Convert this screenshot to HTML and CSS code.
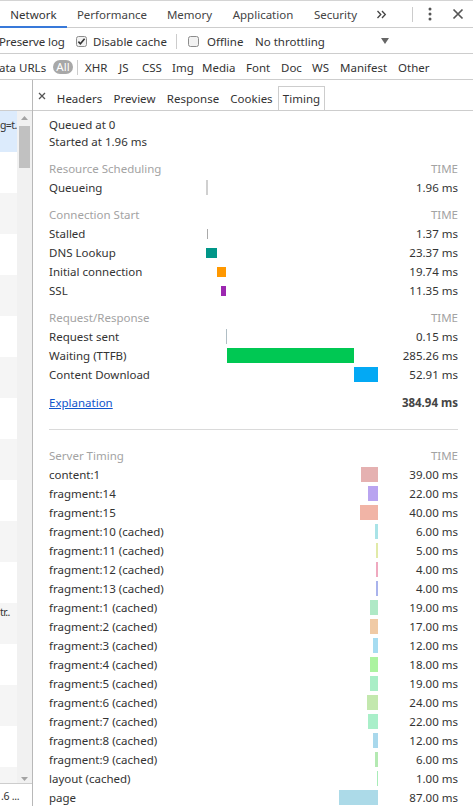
FILE: index.html
```html
<!DOCTYPE html>
<html>
<head>
<meta charset="utf-8">
<title>Network - Timing</title>
<link rel="stylesheet" href="styles.css">
</head>
<body>
<div class="app">
  <div class="tabbar">
    <div class="tab active t-network">Network</div>
    <div class="tab t-perf">Performance</div>
    <div class="tab t-memory">Memory</div>
    <div class="tab t-app">Application</div>
    <div class="tab t-security">Security</div>
    <div class="more"><svg width="11" height="9" viewBox="0 0 11 9"><path d="M1.5 1l3.3 3.5L1.5 8M6 1l3.3 3.5L6 8" fill="none" stroke="#444" stroke-width="1.3"/></svg></div>
    <div class="spacer"></div>
    <div class="vsep"></div>
    <div class="icon kebab"><svg width="16" height="16" viewBox="0 0 16 16"><circle cx="8" cy="3" r="1.5"/><circle cx="8" cy="8" r="1.5"/><circle cx="8" cy="13" r="1.5"/></svg></div>
    <div class="icon closeall"><svg width="16" height="16" viewBox="0 0 16 16"><path d="M3.5 3.5l9 9M12.5 3.5l-9 9" fill="none" stroke="#555" stroke-width="1.7"/></svg></div>
  </div>

  <div class="toolbar opts">
    <span class="lbl l-preserve">Preserve log</span>
    <span class="cb cb-first"><svg width="11" height="11" viewBox="0 0 11 11"><rect x="0.5" y="0.5" width="10" height="10" rx="2" fill="#f2f2f2" stroke="#8c8c8c"/><path d="M2.4 5.6l2 2.1 4.2-4.9" fill="none" stroke="#333" stroke-width="1.6"/></svg></span>
    <span class="lbl l-disable">Disable cache</span>
    <span class="tsep"></span>
    <span class="cb cb-second"><svg width="11" height="11" viewBox="0 0 11 11"><rect x="0.5" y="0.5" width="10" height="10" rx="2" fill="#f2f2f2" stroke="#8c8c8c"/></svg></span>
    <span class="lbl l-offline">Offline</span>
    <span class="lbl l-throttle">No throttling</span>
    <span class="dd"><svg width="8" height="6" viewBox="0 0 8 6"><path d="M0 0h8L4 6z" fill="#666"/></svg></span>
  </div>

  <div class="toolbar filters">
    <span class="lbl l-data">ata URLs</span>
    <span class="pill">All</span>
    <span class="fsep"></span>
    <span class="fitem f-xhr">XHR</span>
    <span class="fitem f-js">JS</span>
    <span class="fitem f-css">CSS</span>
    <span class="fitem f-img">Img</span>
    <span class="fitem f-media">Media</span>
    <span class="fitem f-font">Font</span>
    <span class="fitem f-doc">Doc</span>
    <span class="fitem f-ws">WS</span>
    <span class="fitem f-manifest">Manifest</span>
    <span class="fitem f-other">Other</span>
  </div>

  <div class="main">
    <div class="list">
      <div class="list-head"></div>
      <div class="list-body">
        <div class="rows">
          <div class="row sel"><span class="row-text">g=t.</span></div>
          <div class="row"></div>
          <div class="row"></div>
          <div class="row"></div>
          <div class="row"></div>
          <div class="row"></div>
          <div class="row"></div>
          <div class="row"></div>
          <div class="row"></div>
          <div class="row"></div>
          <div class="row"></div>
          <div class="row"></div>
          <div class="row"><span class="row-text top">tr..</span></div>
          <div class="row"></div>
          <div class="row"></div>
          <div class="row"></div>
          <div class="row"></div>
        </div>
        <div class="vscroll">
          <div class="sarrow"><svg width="7" height="4" viewBox="0 0 7 4"><path d="M0 4h7L3.5 0z" fill="#a3a3a3"/></svg></div>
          <div class="thumb"></div>
          <div class="sfill"></div>
          <div class="sarrow down"><svg width="7" height="4" viewBox="0 0 7 4"><path d="M0 0h7L3.5 4z" fill="#a3a3a3"/></svg></div>
        </div>
      </div>
      <div class="list-status">.6 ...</div>
    </div>

    <div class="detail">
      <div class="dtabs">
        <div class="dclose"><svg width="8" height="8" viewBox="0 0 8 8"><path d="M1 1l6 6M7 1l-6 6" fill="none" stroke="#555" stroke-width="1.3"/></svg></div>
        <div class="dtab d-headers">Headers</div>
        <div class="dtab d-preview">Preview</div>
        <div class="dtab d-response">Response</div>
        <div class="dtab d-cookies">Cookies</div>
        <div class="dtab sel d-timing">Timing</div>
      </div>

      <div class="timing">
        <div class="intro">Queued at 0</div>
        <div class="intro">Started at 1.96 ms</div>

        <div class="thead first"><div class="lab">Resource Scheduling</div><div class="bars"></div><div class="tm">TIME</div></div>
        <div class="trow"><div class="lab">Queueing</div><div class="bars"><span class="bar queueing" style="left:0%;width:0.509%"></span></div><div class="tm">1.96 ms</div></div>

        <div class="thead"><div class="lab">Connection Start</div><div class="bars"></div><div class="tm">TIME</div></div>
        <div class="trow"><div class="lab">Stalled</div><div class="bars"><span class="bar short stalled" style="left:0.509%;width:0.356%"></span></div><div class="tm">1.37 ms</div></div>
        <div class="trow"><div class="lab">DNS Lookup</div><div class="bars"><span class="bar short dns" style="left:0.2%;width:6.071%"></span></div><div class="tm">23.37 ms</div></div>
        <div class="trow"><div class="lab">Initial connection</div><div class="bars"><span class="bar short connecting" style="left:6.4%;width:5.128%"></span></div><div class="tm">19.74 ms</div></div>
        <div class="trow"><div class="lab">SSL</div><div class="bars"><span class="bar short ssl" style="left:8.6%;width:2.949%"></span></div><div class="tm">11.35 ms</div></div>

        <div class="thead"><div class="lab">Request/Response</div><div class="bars"></div><div class="tm">TIME</div></div>
        <div class="trow"><div class="lab">Request sent</div><div class="bars"><span class="bar sending" style="left:11.9%;width:0.039%"></span></div><div class="tm">0.15 ms</div></div>
        <div class="trow"><div class="lab">Waiting (TTFB)</div><div class="bars"><span class="bar waiting" style="left:12.103%;width:74.105%"></span></div><div class="tm">285.26 ms</div></div>
        <div class="trow"><div class="lab">Content Download</div><div class="bars"><span class="bar receiving" style="left:86.208%;width:13.792%"></span></div><div class="tm">52.91 ms</div></div>

        <div class="tfoot"><div class="lab"><a href="#">Explanation</a></div><div class="bars"></div><div class="tm total">384.94 ms</div></div>

        <div class="divider"></div>

        <div class="thead server"><div class="lab">Server Timing</div><div class="bars"></div><div class="tm">TIME</div></div>
        <div class="trow"><div class="lab">content:1</div><div class="bars sbars"><span class="sbar s1" style="width:10.131%"></span></div><div class="tm">39.00 ms</div></div>
        <div class="trow"><div class="lab">fragment:14</div><div class="bars sbars"><span class="sbar s2" style="width:5.715%"></span></div><div class="tm">22.00 ms</div></div>
        <div class="trow"><div class="lab">fragment:15</div><div class="bars sbars"><span class="sbar s3" style="width:10.391%"></span></div><div class="tm">40.00 ms</div></div>
        <div class="trow"><div class="lab">fragment:10 (cached)</div><div class="bars sbars"><span class="sbar s4" style="width:1.559%"></span></div><div class="tm">6.00 ms</div></div>
        <div class="trow"><div class="lab">fragment:11 (cached)</div><div class="bars sbars"><span class="sbar s5" style="width:1.299%"></span></div><div class="tm">5.00 ms</div></div>
        <div class="trow"><div class="lab">fragment:12 (cached)</div><div class="bars sbars"><span class="sbar s6" style="width:1.039%"></span></div><div class="tm">4.00 ms</div></div>
        <div class="trow"><div class="lab">fragment:13 (cached)</div><div class="bars sbars"><span class="sbar s7" style="width:1.039%"></span></div><div class="tm">4.00 ms</div></div>
        <div class="trow"><div class="lab">fragment:1 (cached)</div><div class="bars sbars"><span class="sbar s8" style="width:4.936%"></span></div><div class="tm">19.00 ms</div></div>
        <div class="trow"><div class="lab">fragment:2 (cached)</div><div class="bars sbars"><span class="sbar s9" style="width:4.416%"></span></div><div class="tm">17.00 ms</div></div>
        <div class="trow"><div class="lab">fragment:3 (cached)</div><div class="bars sbars"><span class="sbar s10" style="width:3.117%"></span></div><div class="tm">12.00 ms</div></div>
        <div class="trow"><div class="lab">fragment:4 (cached)</div><div class="bars sbars"><span class="sbar s11" style="width:4.676%"></span></div><div class="tm">18.00 ms</div></div>
        <div class="trow"><div class="lab">fragment:5 (cached)</div><div class="bars sbars"><span class="sbar s12" style="width:4.936%"></span></div><div class="tm">19.00 ms</div></div>
        <div class="trow"><div class="lab">fragment:6 (cached)</div><div class="bars sbars"><span class="sbar s13" style="width:6.235%"></span></div><div class="tm">24.00 ms</div></div>
        <div class="trow"><div class="lab">fragment:7 (cached)</div><div class="bars sbars"><span class="sbar s14" style="width:5.715%"></span></div><div class="tm">22.00 ms</div></div>
        <div class="trow"><div class="lab">fragment:8 (cached)</div><div class="bars sbars"><span class="sbar s15" style="width:3.117%"></span></div><div class="tm">12.00 ms</div></div>
        <div class="trow"><div class="lab">fragment:9 (cached)</div><div class="bars sbars"><span class="sbar s16" style="width:1.559%"></span></div><div class="tm">6.00 ms</div></div>
        <div class="trow"><div class="lab">layout (cached)</div><div class="bars sbars"><span class="sbar s17" style="width:0.26%"></span></div><div class="tm">1.00 ms</div></div>
        <div class="trow"><div class="lab">page</div><div class="bars sbars"><span class="sbar s18" style="width:22.601%"></span></div><div class="tm">87.00 ms</div></div>
      </div>
    </div>
  </div>
</div>
</body>
</html>
```

FILE: styles.css
```css
* { box-sizing: border-box; }
html, body { margin: 0; padding: 0; }
body {
  font-family: "Noto Sans", "DejaVu Sans", sans-serif;
  font-size: 11.5px;
  color: #333;
  background: #fff;
  width: 473px;
  height: 806px;
  overflow: hidden;
}
.app { display: flex; flex-direction: column; height: 806px; overflow: hidden; }

/* top tab bar */
.tabbar {
  flex: none;
  display: flex;
  height: 28px;
  border-top: 1px solid #d4d4d4;
  border-bottom: 1px solid #cdcdcd;
  white-space: nowrap;
}
.tab {
  display: flex;
  align-items: center;
  justify-content: center;
  padding-top: 1px;
  color: #444;
}
.tab.active { color: #333; border-bottom: 2px solid #3879d9; margin-bottom: -1px; padding-top: 2px; }
.t-network { width: 67px; }
.t-perf { width: 90px; }
.t-memory { width: 65px; }
.t-app { width: 82px; }
.t-security { width: 63px; }
.more { display: flex; align-items: center; margin-left: 9px; padding-top: 1px; }
.spacer { flex: 1; }
.vsep { width: 1px; height: 15px; background: #ccc; align-self: center; }
.icon { display: flex; align-items: center; justify-content: center; width: 16px; }
.kebab { margin-left: 9px; fill: #555; }
.closeall { margin-left: 12px; margin-right: 7px; }

/* toolbars */
.toolbar {
  flex: none;
  display: flex;
  align-items: center;
  height: 26px;
  border-bottom: 1px solid #cdcdcd;
  white-space: nowrap;
  padding-top: 1px;
}
.lbl { display: inline-block; }
.l-preserve { margin-left: -1px; width: 68px; letter-spacing: -0.1px; }
.cb { display: flex; align-items: center; width: 11px; height: 11px; }
.cb-first { margin-left: 9px; }
.l-disable { margin-left: 6px; width: 74px; }
.tsep { width: 1px; height: 15px; background: #ccc; margin-left: 9px; }
.cb-second { margin-left: 11px; }
.l-offline { margin-left: 8px; width: 40px; }
.l-throttle { margin-left: 8px; width: 72px; }
.dd { display: flex; align-items: center; margin-left: 54px; }

.l-data { margin-left: -1px; width: 47px; }
.pill {
  margin-left: 7px;
  width: 20px;
  height: 14px;
  line-height: 14px;
  border-radius: 7px;
  background: #a8a8a8;
  color: #fff;
  text-align: center;
}
.fsep { width: 1px; height: 15px; background: #ccc; margin-left: 4px; margin-right: 2px; }
.fitem { padding-left: 5px; display: inline-block; }
.f-xhr { width: 34px; }
.f-js { width: 23px; }
.f-css { width: 30px; }
.f-img { width: 30px; }
.f-media { width: 44px; }
.f-font { width: 35px; }
.f-doc { width: 31px; }
.f-ws { width: 28px; }
.f-manifest { width: 58px; }
.f-other { width: 42px; }

/* main split */
.main { flex: 1; display: flex; min-height: 0; }

.list {
  flex: none;
  width: 33px;
  border-right: 1px solid #b8b8b8;
  display: flex;
  flex-direction: column;
}
.list-head { flex: none; height: 31px; border-bottom: 1px solid #cdcdcd; }
.list-body { flex: 1; display: flex; min-height: 0; }
.rows { width: 17px; overflow: hidden; }
.row { height: 41px; background: #fff; overflow: hidden; white-space: nowrap; }
.row:nth-child(odd) { background: #f5f5f5; }
.row.sel { background: #dcebfc; }
.row-text {
  display: block;
  padding-top: 6px;
  line-height: 17px;
  font-size: 10.5px;
  letter-spacing: -0.6px;
}
.row-text.top { padding-top: 1px; }
.vscroll {
  width: 15px;
  background: #f1f1f1;
  display: flex;
  flex-direction: column;
  align-items: center;
}
.sarrow { height: 13px; display: flex; align-items: center; justify-content: center; }
.sarrow.down { align-items: flex-end; padding-bottom: 2px; }
.thumb { margin-top: 2px; width: 11px; height: 42px; background: #c1c1c1; }
.sfill { flex: 1; }
.list-status {
  flex: none;
  height: 23px;
  border-top: 1px solid #cdcdcd;
  padding-top: 4px;
  padding-left: 1px;
  line-height: 17px;
  white-space: nowrap;
  font-size: 10.5px;
  letter-spacing: -0.3px;
}

/* detail pane */
.detail { flex: 1; min-width: 0; display: flex; flex-direction: column; overflow: hidden; }
.dtabs {
  flex: none;
  height: 31px;
  border-bottom: 1px solid #cdcdcd;
  display: flex;
  align-items: flex-end;
  white-space: nowrap;
}
.dclose { width: 18px; height: 24px; display: flex; align-items: center; justify-content: center; padding-bottom: 4px; }
.dtab {
  height: 24px;
  display: flex;
  align-items: center;
  justify-content: center;
  border: 1px solid transparent;
  border-bottom: none;
  color: #333;
}
.dtab.sel { border-color: #cdcdcd; background: #fff; }
.d-headers { width: 57px; }
.d-preview { width: 53px; }
.d-response { width: 64px; }
.d-cookies { width: 53px; }
.d-timing { width: 47px; }

.timing { flex: 1; padding: 5px 15px 0 16px; overflow: hidden; }
.intro { height: 17px; line-height: 17px; white-space: nowrap; }
.thead {
  display: flex;
  height: 27px;
  padding-top: 9px;
  line-height: 18px;
  color: #a3a3a3;
}
.thead.first { height: 28px; padding-top: 10px; }
.thead.server { height: 35px; padding-top: 17px; }
.trow { display: flex; height: 19px; line-height: 19px; }
.tfoot { display: flex; height: 28px; padding-top: 9px; line-height: 19px; }
.lab { width: 157px; flex: none; white-space: nowrap; }
.bars { width: 172px; flex: none; position: relative; }
.tm { width: 80px; flex: none; text-align: right; white-space: nowrap; }
.tfoot a { color: #1155cc; text-decoration: underline; }
.tm.total { font-weight: bold; color: #444; }

.bar { position: absolute; top: 2px; height: 15px; min-width: 1px; }
.bar.short { top: 5px; height: 10px; }
.queueing { background: #d0d0d0; min-width: 2px; }
.stalled { background: #aaa; top: 4px; }
.dns { background: #009688; }
.connecting { background: #ff9800; }
.ssl { background: #9c27b0; }
.sending { background: #b0bec5; }
.waiting { background: #00c853; }
.receiving { background: #03a9f4; }

.divider { height: 1px; background: #dadada; margin-top: 17px; }

.sbars { display: flex; justify-content: flex-end; align-items: center; }
.sbar { height: 15px; min-width: 1px; }
.s1 { background: #e5b1b1; }
.s2 { background: #b9a4f0; }
.s3 { background: #f1b4a6; }
.s4 { background: #a9e3e7; }
.s5 { background: #e1eaa8; }
.s6 { background: #efa9bf; }
.s7 { background: #a9b3ec; }
.s8 { background: #afe9c6; }
.s9 { background: #f0caa5; }
.s10 { background: #a6dcf1; }
.s11 { background: #acf3a0; }
.s12 { background: #a9eec6; }
.s13 { background: #c3e8ae; }
.s14 { background: #a9efc9; }
.s15 { background: #a9d8ec; }
.s16 { background: #b4e9b2; }
.s17 { background: #a8ecb8; }
.s18 { background: #acdae8; }
```
